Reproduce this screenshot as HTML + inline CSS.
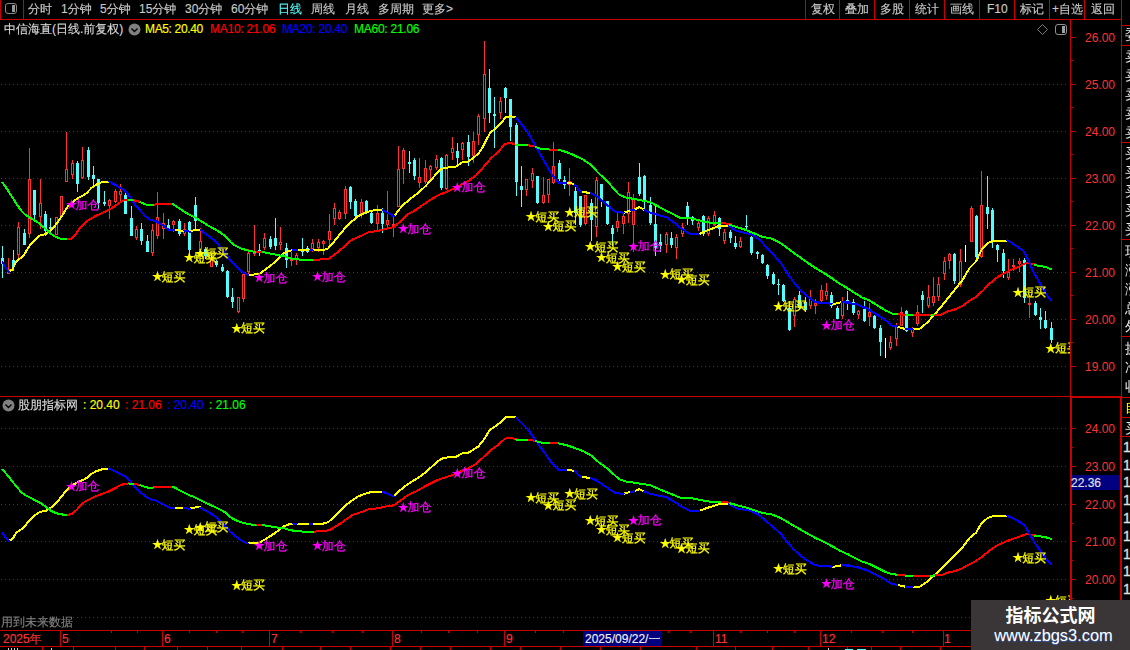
<!DOCTYPE html><html><head><meta charset="utf-8"><title>chart</title><style>
html,body{margin:0;padding:0;background:#000;}
body{width:1130px;height:650px;overflow:hidden;position:relative;font-family:"Liberation Sans","WenQuanYi Zen Hei",sans-serif;font-size:12px;color:#c8c8c8;}
.t{position:absolute;white-space:nowrap;line-height:14px;height:14px;-webkit-text-stroke:0.15px;}
.ax{position:absolute;left:1085px;color:#ff3232;line-height:14px;}
.s{position:absolute;left:1125px;font-size:14px;line-height:16px;color:#e8e8e8;white-space:nowrap;}
.one{position:absolute;left:1123px;font-size:14px;color:#e0e0e0;line-height:16px;-webkit-text-stroke:0.3px;}
#wm{position:absolute;left:971px;top:600px;width:159px;height:50px;background:#3a3536;text-align:center;color:#fff;}

</style></head><body>
<svg width="1130" height="650" viewBox="0 0 1130 650" style="position:absolute;left:0;top:0" shape-rendering="crispEdges">
<line x1="1" y1="84.5" x2="1066" y2="84.5" stroke="#c80000" stroke-width="1" stroke-dasharray="1 3"/>
<line x1="1" y1="131.5" x2="1066" y2="131.5" stroke="#c80000" stroke-width="1" stroke-dasharray="1 3"/>
<line x1="1" y1="178.5" x2="1066" y2="178.5" stroke="#c80000" stroke-width="1" stroke-dasharray="1 3"/>
<line x1="1" y1="225.5" x2="1066" y2="225.5" stroke="#c80000" stroke-width="1" stroke-dasharray="1 3"/>
<line x1="1" y1="272.5" x2="1066" y2="272.5" stroke="#c80000" stroke-width="1" stroke-dasharray="1 3"/>
<line x1="1" y1="319.5" x2="1066" y2="319.5" stroke="#c80000" stroke-width="1" stroke-dasharray="1 3"/>
<line x1="1" y1="366.5" x2="1066" y2="366.5" stroke="#c80000" stroke-width="1" stroke-dasharray="1 3"/>
<line x1="1" y1="428.5" x2="1066" y2="428.5" stroke="#c80000" stroke-width="1" stroke-dasharray="1 3"/>
<line x1="1" y1="466.5" x2="1066" y2="466.5" stroke="#c80000" stroke-width="1" stroke-dasharray="1 3"/>
<line x1="1" y1="504.5" x2="1066" y2="504.5" stroke="#c80000" stroke-width="1" stroke-dasharray="1 3"/>
<line x1="1" y1="541.5" x2="1066" y2="541.5" stroke="#c80000" stroke-width="1" stroke-dasharray="1 3"/>
<line x1="1" y1="579.5" x2="1066" y2="579.5" stroke="#c80000" stroke-width="1" stroke-dasharray="1 3"/>
<line x1="73" y1="617.5" x2="1066" y2="617.5" stroke="#c80000" stroke-width="1" stroke-dasharray="1 3"/>
<rect x="2" y="246" width="1" height="32" fill="#54fcfc"/>
<rect x="1" y="258" width="3" height="6" fill="#54fcfc"/>
<rect x="8" y="258" width="1" height="16" fill="#ff3232"/>
<rect x="7" y="269" width="3" height="5" fill="#ff3232"/>
<rect x="8" y="270" width="1" height="3" fill="#000"/>
<rect x="13" y="250" width="1" height="21" fill="#54fcfc"/>
<rect x="12" y="260" width="3" height="7" fill="#54fcfc"/>
<rect x="18" y="222" width="1" height="36" fill="#ff3232"/>
<rect x="17" y="227" width="3" height="28" fill="#ff3232"/>
<rect x="18" y="228" width="1" height="26" fill="#000"/>
<rect x="24" y="229" width="1" height="16" fill="#54fcfc"/>
<rect x="23" y="233" width="3" height="12" fill="#54fcfc"/>
<rect x="29" y="148" width="1" height="90" fill="#ff3232"/>
<rect x="28" y="179" width="3" height="55" fill="#ff3232"/>
<rect x="29" y="180" width="1" height="53" fill="#000"/>
<rect x="34" y="190" width="1" height="30" fill="#54fcfc"/>
<rect x="33" y="190" width="3" height="25" fill="#54fcfc"/>
<rect x="40" y="179" width="1" height="50" fill="#ff3232"/>
<rect x="39" y="203" width="3" height="14" fill="#ff3232"/>
<rect x="40" y="204" width="1" height="12" fill="#000"/>
<rect x="45" y="211" width="1" height="25" fill="#54fcfc"/>
<rect x="44" y="214" width="3" height="17" fill="#54fcfc"/>
<rect x="50" y="218" width="1" height="17" fill="#54fcfc"/>
<rect x="49" y="227" width="3" height="2" fill="#54fcfc"/>
<rect x="56" y="217" width="1" height="18" fill="#ff3232"/>
<rect x="55" y="217" width="3" height="18" fill="#ff3232"/>
<rect x="56" y="218" width="1" height="16" fill="#000"/>
<rect x="61" y="196" width="1" height="21" fill="#ff3232"/>
<rect x="60" y="196" width="3" height="21" fill="#ff3232"/>
<rect x="61" y="197" width="1" height="19" fill="#000"/>
<rect x="66" y="132" width="1" height="50" fill="#ff3232"/>
<rect x="65" y="169" width="3" height="13" fill="#ff3232"/>
<rect x="66" y="170" width="1" height="11" fill="#000"/>
<rect x="72" y="160" width="1" height="19" fill="#ff3232"/>
<rect x="71" y="163" width="3" height="12" fill="#ff3232"/>
<rect x="72" y="164" width="1" height="10" fill="#000"/>
<rect x="77" y="161" width="1" height="31" fill="#54fcfc"/>
<rect x="76" y="163" width="3" height="21" fill="#54fcfc"/>
<rect x="82" y="147" width="1" height="32" fill="#ff3232"/>
<rect x="81" y="160" width="3" height="18" fill="#ff3232"/>
<rect x="82" y="161" width="1" height="16" fill="#000"/>
<rect x="88" y="147" width="1" height="33" fill="#54fcfc"/>
<rect x="87" y="150" width="3" height="27" fill="#54fcfc"/>
<rect x="93" y="166" width="1" height="20" fill="#54fcfc"/>
<rect x="92" y="175" width="3" height="4" fill="#54fcfc"/>
<rect x="98" y="179" width="1" height="30" fill="#54fcfc"/>
<rect x="97" y="179" width="3" height="24" fill="#54fcfc"/>
<rect x="104" y="191" width="1" height="15" fill="#54fcfc"/>
<rect x="103" y="202" width="3" height="2" fill="#54fcfc"/>
<rect x="109" y="199" width="1" height="20" fill="#ff3232"/>
<rect x="108" y="200" width="3" height="6" fill="#ff3232"/>
<rect x="109" y="201" width="1" height="4" fill="#000"/>
<rect x="115" y="189" width="1" height="14" fill="#ff3232"/>
<rect x="114" y="191" width="3" height="11" fill="#ff3232"/>
<rect x="115" y="192" width="1" height="9" fill="#000"/>
<rect x="120" y="184" width="1" height="19" fill="#ff3232"/>
<rect x="119" y="191" width="3" height="4" fill="#ff3232"/>
<rect x="120" y="192" width="1" height="2" fill="#000"/>
<rect x="125" y="192" width="1" height="22" fill="#54fcfc"/>
<rect x="124" y="195" width="3" height="19" fill="#54fcfc"/>
<rect x="131" y="206" width="1" height="30" fill="#54fcfc"/>
<rect x="130" y="218" width="3" height="18" fill="#54fcfc"/>
<rect x="136" y="226" width="1" height="14" fill="#ff3232"/>
<rect x="135" y="229" width="3" height="9" fill="#ff3232"/>
<rect x="136" y="230" width="1" height="7" fill="#000"/>
<rect x="141" y="223" width="1" height="22" fill="#54fcfc"/>
<rect x="140" y="229" width="3" height="12" fill="#54fcfc"/>
<rect x="147" y="235" width="1" height="17" fill="#54fcfc"/>
<rect x="146" y="241" width="3" height="11" fill="#54fcfc"/>
<rect x="152" y="224" width="1" height="32" fill="#ff3232"/>
<rect x="151" y="230" width="3" height="23" fill="#ff3232"/>
<rect x="152" y="231" width="1" height="21" fill="#000"/>
<rect x="157" y="192" width="1" height="47" fill="#ff3232"/>
<rect x="156" y="217" width="3" height="19" fill="#ff3232"/>
<rect x="157" y="218" width="1" height="17" fill="#000"/>
<rect x="163" y="213" width="1" height="26" fill="#ff3232"/>
<rect x="162" y="223" width="3" height="6" fill="#ff3232"/>
<rect x="163" y="224" width="1" height="4" fill="#000"/>
<rect x="168" y="219" width="1" height="10" fill="#54fcfc"/>
<rect x="167" y="225" width="3" height="4" fill="#54fcfc"/>
<rect x="173" y="220" width="1" height="12" fill="#ff3232"/>
<rect x="172" y="221" width="3" height="4" fill="#ff3232"/>
<rect x="173" y="222" width="1" height="2" fill="#000"/>
<rect x="179" y="219" width="1" height="17" fill="#54fcfc"/>
<rect x="178" y="221" width="3" height="13" fill="#54fcfc"/>
<rect x="184" y="223" width="1" height="13" fill="#ff3232"/>
<rect x="183" y="229" width="3" height="5" fill="#ff3232"/>
<rect x="184" y="230" width="1" height="3" fill="#000"/>
<rect x="189" y="221" width="1" height="38" fill="#54fcfc"/>
<rect x="188" y="222" width="3" height="28" fill="#54fcfc"/>
<rect x="195" y="197" width="1" height="32" fill="#54fcfc"/>
<rect x="194" y="205" width="3" height="16" fill="#54fcfc"/>
<rect x="200" y="228" width="1" height="22" fill="#ff3232"/>
<rect x="199" y="241" width="3" height="9" fill="#ff3232"/>
<rect x="200" y="242" width="1" height="7" fill="#000"/>
<rect x="205" y="247" width="1" height="12" fill="#54fcfc"/>
<rect x="204" y="249" width="3" height="7" fill="#54fcfc"/>
<rect x="211" y="254" width="1" height="13" fill="#ff3232"/>
<rect x="210" y="259" width="3" height="8" fill="#ff3232"/>
<rect x="211" y="260" width="1" height="6" fill="#000"/>
<rect x="216" y="260" width="1" height="7" fill="#54fcfc"/>
<rect x="215" y="261" width="3" height="4" fill="#54fcfc"/>
<rect x="222" y="264" width="1" height="8" fill="#54fcfc"/>
<rect x="221" y="267" width="3" height="4" fill="#54fcfc"/>
<rect x="227" y="270" width="1" height="28" fill="#54fcfc"/>
<rect x="226" y="271" width="3" height="26" fill="#54fcfc"/>
<rect x="232" y="288" width="1" height="20" fill="#54fcfc"/>
<rect x="231" y="297" width="3" height="5" fill="#54fcfc"/>
<rect x="238" y="297" width="1" height="16" fill="#ff3232"/>
<rect x="237" y="297" width="3" height="15" fill="#ff3232"/>
<rect x="238" y="298" width="1" height="13" fill="#000"/>
<rect x="243" y="272" width="1" height="30" fill="#ff3232"/>
<rect x="242" y="274" width="3" height="25" fill="#ff3232"/>
<rect x="243" y="275" width="1" height="23" fill="#000"/>
<rect x="248" y="249" width="1" height="25" fill="#ff3232"/>
<rect x="247" y="253" width="3" height="19" fill="#ff3232"/>
<rect x="248" y="254" width="1" height="17" fill="#000"/>
<rect x="254" y="225" width="1" height="31" fill="#ff3232"/>
<rect x="253" y="252" width="3" height="2" fill="#ff3232"/>
<rect x="259" y="244" width="1" height="12" fill="#54fcfc"/>
<rect x="258" y="250" width="3" height="2" fill="#54fcfc"/>
<rect x="264" y="233" width="1" height="17" fill="#ff3232"/>
<rect x="263" y="238" width="3" height="10" fill="#ff3232"/>
<rect x="264" y="239" width="1" height="8" fill="#000"/>
<rect x="270" y="236" width="1" height="13" fill="#54fcfc"/>
<rect x="269" y="239" width="3" height="8" fill="#54fcfc"/>
<rect x="275" y="218" width="1" height="32" fill="#54fcfc"/>
<rect x="274" y="238" width="3" height="8" fill="#54fcfc"/>
<rect x="280" y="227" width="1" height="23" fill="#ff3232"/>
<rect x="279" y="242" width="3" height="3" fill="#ff3232"/>
<rect x="280" y="243" width="1" height="1" fill="#000"/>
<rect x="286" y="243" width="1" height="25" fill="#54fcfc"/>
<rect x="285" y="248" width="3" height="12" fill="#54fcfc"/>
<rect x="291" y="252" width="1" height="14" fill="#ff3232"/>
<rect x="290" y="259" width="3" height="2" fill="#ff3232"/>
<rect x="296" y="253" width="1" height="12" fill="#ff3232"/>
<rect x="295" y="255" width="3" height="5" fill="#ff3232"/>
<rect x="296" y="256" width="1" height="3" fill="#000"/>
<rect x="302" y="238" width="1" height="18" fill="#54fcfc"/>
<rect x="301" y="249" width="3" height="3" fill="#54fcfc"/>
<rect x="307" y="246" width="1" height="7" fill="#54fcfc"/>
<rect x="306" y="248" width="3" height="4" fill="#54fcfc"/>
<rect x="312" y="239" width="1" height="13" fill="#ff3232"/>
<rect x="311" y="243" width="3" height="6" fill="#ff3232"/>
<rect x="312" y="244" width="1" height="4" fill="#000"/>
<rect x="318" y="239" width="1" height="13" fill="#ff3232"/>
<rect x="317" y="242" width="3" height="6" fill="#ff3232"/>
<rect x="318" y="243" width="1" height="4" fill="#000"/>
<rect x="323" y="240" width="1" height="15" fill="#ff3232"/>
<rect x="322" y="241" width="3" height="3" fill="#ff3232"/>
<rect x="323" y="242" width="1" height="1" fill="#000"/>
<rect x="329" y="214" width="1" height="31" fill="#ff3232"/>
<rect x="328" y="231" width="3" height="9" fill="#ff3232"/>
<rect x="329" y="232" width="1" height="7" fill="#000"/>
<rect x="334" y="203" width="1" height="22" fill="#ff3232"/>
<rect x="333" y="208" width="3" height="11" fill="#ff3232"/>
<rect x="334" y="209" width="1" height="9" fill="#000"/>
<rect x="339" y="210" width="1" height="10" fill="#ff3232"/>
<rect x="338" y="212" width="3" height="7" fill="#ff3232"/>
<rect x="339" y="213" width="1" height="5" fill="#000"/>
<rect x="345" y="186" width="1" height="33" fill="#ff3232"/>
<rect x="344" y="189" width="3" height="25" fill="#ff3232"/>
<rect x="345" y="190" width="1" height="23" fill="#000"/>
<rect x="350" y="186" width="1" height="23" fill="#54fcfc"/>
<rect x="349" y="187" width="3" height="15" fill="#54fcfc"/>
<rect x="355" y="199" width="1" height="19" fill="#54fcfc"/>
<rect x="354" y="201" width="3" height="15" fill="#54fcfc"/>
<rect x="361" y="199" width="1" height="19" fill="#ff3232"/>
<rect x="360" y="202" width="3" height="12" fill="#ff3232"/>
<rect x="361" y="203" width="1" height="10" fill="#000"/>
<rect x="366" y="200" width="1" height="14" fill="#54fcfc"/>
<rect x="365" y="201" width="3" height="12" fill="#54fcfc"/>
<rect x="371" y="212" width="1" height="12" fill="#54fcfc"/>
<rect x="370" y="213" width="3" height="10" fill="#54fcfc"/>
<rect x="377" y="205" width="1" height="25" fill="#ff3232"/>
<rect x="376" y="213" width="3" height="11" fill="#ff3232"/>
<rect x="377" y="214" width="1" height="9" fill="#000"/>
<rect x="382" y="208" width="1" height="25" fill="#54fcfc"/>
<rect x="381" y="213" width="3" height="11" fill="#54fcfc"/>
<rect x="387" y="191" width="1" height="36" fill="#ff3232"/>
<rect x="386" y="220" width="3" height="5" fill="#ff3232"/>
<rect x="387" y="221" width="1" height="3" fill="#000"/>
<rect x="393" y="216" width="1" height="21" fill="#ff3232"/>
<rect x="392" y="224" width="3" height="2" fill="#ff3232"/>
<rect x="398" y="146" width="1" height="61" fill="#ff3232"/>
<rect x="397" y="169" width="3" height="38" fill="#ff3232"/>
<rect x="398" y="170" width="1" height="36" fill="#000"/>
<rect x="403" y="148" width="1" height="36" fill="#ff3232"/>
<rect x="402" y="150" width="3" height="19" fill="#ff3232"/>
<rect x="403" y="151" width="1" height="17" fill="#000"/>
<rect x="409" y="151" width="1" height="22" fill="#54fcfc"/>
<rect x="408" y="162" width="3" height="2" fill="#54fcfc"/>
<rect x="414" y="158" width="1" height="22" fill="#54fcfc"/>
<rect x="413" y="160" width="3" height="16" fill="#54fcfc"/>
<rect x="419" y="158" width="1" height="30" fill="#ff3232"/>
<rect x="418" y="177" width="3" height="6" fill="#ff3232"/>
<rect x="419" y="178" width="1" height="4" fill="#000"/>
<rect x="425" y="160" width="1" height="24" fill="#ff3232"/>
<rect x="424" y="168" width="3" height="14" fill="#ff3232"/>
<rect x="425" y="169" width="1" height="12" fill="#000"/>
<rect x="430" y="165" width="1" height="14" fill="#ff3232"/>
<rect x="429" y="166" width="3" height="4" fill="#ff3232"/>
<rect x="430" y="167" width="1" height="2" fill="#000"/>
<rect x="436" y="155" width="1" height="15" fill="#ff3232"/>
<rect x="435" y="159" width="3" height="9" fill="#ff3232"/>
<rect x="436" y="160" width="1" height="7" fill="#000"/>
<rect x="441" y="157" width="1" height="33" fill="#54fcfc"/>
<rect x="440" y="158" width="3" height="30" fill="#54fcfc"/>
<rect x="446" y="154" width="1" height="36" fill="#ff3232"/>
<rect x="445" y="155" width="3" height="34" fill="#ff3232"/>
<rect x="446" y="156" width="1" height="32" fill="#000"/>
<rect x="452" y="137" width="1" height="23" fill="#ff3232"/>
<rect x="451" y="148" width="3" height="5" fill="#ff3232"/>
<rect x="452" y="149" width="1" height="3" fill="#000"/>
<rect x="457" y="143" width="1" height="23" fill="#54fcfc"/>
<rect x="456" y="151" width="3" height="7" fill="#54fcfc"/>
<rect x="462" y="142" width="1" height="18" fill="#ff3232"/>
<rect x="461" y="143" width="3" height="7" fill="#ff3232"/>
<rect x="462" y="144" width="1" height="5" fill="#000"/>
<rect x="468" y="135" width="1" height="31" fill="#54fcfc"/>
<rect x="467" y="142" width="3" height="15" fill="#54fcfc"/>
<rect x="473" y="132" width="1" height="31" fill="#ff3232"/>
<rect x="472" y="141" width="3" height="15" fill="#ff3232"/>
<rect x="473" y="142" width="1" height="13" fill="#000"/>
<rect x="478" y="114" width="1" height="31" fill="#ff3232"/>
<rect x="477" y="116" width="3" height="19" fill="#ff3232"/>
<rect x="478" y="117" width="1" height="17" fill="#000"/>
<rect x="484" y="41" width="1" height="91" fill="#ff3232"/>
<rect x="483" y="74" width="3" height="45" fill="#ff3232"/>
<rect x="484" y="75" width="1" height="43" fill="#000"/>
<rect x="489" y="69" width="1" height="54" fill="#54fcfc"/>
<rect x="488" y="88" width="3" height="25" fill="#54fcfc"/>
<rect x="494" y="97" width="1" height="51" fill="#54fcfc"/>
<rect x="493" y="114" width="3" height="2" fill="#54fcfc"/>
<rect x="500" y="97" width="1" height="22" fill="#ff3232"/>
<rect x="499" y="101" width="3" height="12" fill="#ff3232"/>
<rect x="500" y="102" width="1" height="10" fill="#000"/>
<rect x="505" y="87" width="1" height="26" fill="#54fcfc"/>
<rect x="504" y="88" width="3" height="10" fill="#54fcfc"/>
<rect x="510" y="99" width="1" height="42" fill="#54fcfc"/>
<rect x="509" y="99" width="3" height="28" fill="#54fcfc"/>
<rect x="516" y="123" width="1" height="73" fill="#54fcfc"/>
<rect x="515" y="125" width="3" height="57" fill="#54fcfc"/>
<rect x="521" y="166" width="1" height="41" fill="#54fcfc"/>
<rect x="520" y="186" width="3" height="4" fill="#54fcfc"/>
<rect x="526" y="179" width="1" height="17" fill="#ff3232"/>
<rect x="525" y="179" width="3" height="11" fill="#ff3232"/>
<rect x="526" y="180" width="1" height="9" fill="#000"/>
<rect x="532" y="168" width="1" height="20" fill="#ff3232"/>
<rect x="531" y="173" width="3" height="8" fill="#ff3232"/>
<rect x="532" y="174" width="1" height="6" fill="#000"/>
<rect x="537" y="176" width="1" height="28" fill="#54fcfc"/>
<rect x="536" y="176" width="3" height="27" fill="#54fcfc"/>
<rect x="543" y="177" width="1" height="27" fill="#ff3232"/>
<rect x="542" y="195" width="3" height="8" fill="#ff3232"/>
<rect x="543" y="196" width="1" height="6" fill="#000"/>
<rect x="548" y="179" width="1" height="24" fill="#ff3232"/>
<rect x="547" y="179" width="3" height="16" fill="#ff3232"/>
<rect x="548" y="180" width="1" height="14" fill="#000"/>
<rect x="553" y="142" width="1" height="42" fill="#ff3232"/>
<rect x="552" y="166" width="3" height="17" fill="#ff3232"/>
<rect x="553" y="167" width="1" height="15" fill="#000"/>
<rect x="559" y="160" width="1" height="21" fill="#54fcfc"/>
<rect x="558" y="163" width="3" height="16" fill="#54fcfc"/>
<rect x="564" y="176" width="1" height="13" fill="#54fcfc"/>
<rect x="563" y="180" width="3" height="5" fill="#54fcfc"/>
<rect x="569" y="168" width="1" height="28" fill="#ff3232"/>
<rect x="568" y="181" width="3" height="4" fill="#ff3232"/>
<rect x="569" y="182" width="1" height="2" fill="#000"/>
<rect x="575" y="187" width="1" height="38" fill="#54fcfc"/>
<rect x="574" y="191" width="3" height="22" fill="#54fcfc"/>
<rect x="580" y="196" width="1" height="31" fill="#54fcfc"/>
<rect x="579" y="196" width="3" height="29" fill="#54fcfc"/>
<rect x="585" y="195" width="1" height="30" fill="#ff3232"/>
<rect x="584" y="195" width="3" height="29" fill="#ff3232"/>
<rect x="585" y="196" width="1" height="27" fill="#000"/>
<rect x="591" y="199" width="1" height="42" fill="#54fcfc"/>
<rect x="590" y="203" width="3" height="17" fill="#54fcfc"/>
<rect x="596" y="177" width="1" height="60" fill="#ff3232"/>
<rect x="595" y="180" width="3" height="47" fill="#ff3232"/>
<rect x="596" y="181" width="1" height="45" fill="#000"/>
<rect x="601" y="184" width="1" height="23" fill="#54fcfc"/>
<rect x="600" y="184" width="3" height="17" fill="#54fcfc"/>
<rect x="607" y="201" width="1" height="24" fill="#54fcfc"/>
<rect x="606" y="201" width="3" height="23" fill="#54fcfc"/>
<rect x="612" y="225" width="1" height="21" fill="#54fcfc"/>
<rect x="611" y="228" width="3" height="6" fill="#54fcfc"/>
<rect x="617" y="213" width="1" height="19" fill="#ff3232"/>
<rect x="616" y="221" width="3" height="7" fill="#ff3232"/>
<rect x="617" y="222" width="1" height="5" fill="#000"/>
<rect x="623" y="214" width="1" height="20" fill="#ff3232"/>
<rect x="622" y="216" width="3" height="8" fill="#ff3232"/>
<rect x="623" y="217" width="1" height="6" fill="#000"/>
<rect x="628" y="182" width="1" height="41" fill="#ff3232"/>
<rect x="627" y="192" width="3" height="22" fill="#ff3232"/>
<rect x="628" y="193" width="1" height="20" fill="#000"/>
<rect x="633" y="194" width="1" height="58" fill="#ff3232"/>
<rect x="632" y="199" width="3" height="26" fill="#ff3232"/>
<rect x="633" y="200" width="1" height="24" fill="#000"/>
<rect x="639" y="163" width="1" height="33" fill="#54fcfc"/>
<rect x="638" y="177" width="3" height="17" fill="#54fcfc"/>
<rect x="644" y="175" width="1" height="35" fill="#54fcfc"/>
<rect x="643" y="176" width="3" height="25" fill="#54fcfc"/>
<rect x="650" y="197" width="1" height="28" fill="#54fcfc"/>
<rect x="649" y="205" width="3" height="18" fill="#54fcfc"/>
<rect x="655" y="205" width="1" height="51" fill="#54fcfc"/>
<rect x="654" y="224" width="3" height="24" fill="#54fcfc"/>
<rect x="660" y="234" width="1" height="18" fill="#54fcfc"/>
<rect x="659" y="242" width="3" height="4" fill="#54fcfc"/>
<rect x="666" y="232" width="1" height="21" fill="#ff3232"/>
<rect x="665" y="234" width="3" height="11" fill="#ff3232"/>
<rect x="666" y="235" width="1" height="9" fill="#000"/>
<rect x="671" y="232" width="1" height="16" fill="#54fcfc"/>
<rect x="670" y="238" width="3" height="7" fill="#54fcfc"/>
<rect x="676" y="234" width="1" height="25" fill="#ff3232"/>
<rect x="675" y="237" width="3" height="11" fill="#ff3232"/>
<rect x="676" y="238" width="1" height="9" fill="#000"/>
<rect x="682" y="223" width="1" height="14" fill="#ff3232"/>
<rect x="681" y="227" width="3" height="7" fill="#ff3232"/>
<rect x="682" y="228" width="1" height="5" fill="#000"/>
<rect x="687" y="202" width="1" height="23" fill="#54fcfc"/>
<rect x="686" y="206" width="3" height="13" fill="#54fcfc"/>
<rect x="692" y="216" width="1" height="9" fill="#54fcfc"/>
<rect x="691" y="217" width="3" height="4" fill="#54fcfc"/>
<rect x="698" y="221" width="1" height="10" fill="#ff3232"/>
<rect x="697" y="223" width="3" height="5" fill="#ff3232"/>
<rect x="698" y="224" width="1" height="3" fill="#000"/>
<rect x="703" y="215" width="1" height="21" fill="#54fcfc"/>
<rect x="702" y="216" width="3" height="18" fill="#54fcfc"/>
<rect x="708" y="216" width="1" height="20" fill="#ff3232"/>
<rect x="707" y="218" width="3" height="16" fill="#ff3232"/>
<rect x="708" y="219" width="1" height="14" fill="#000"/>
<rect x="714" y="211" width="1" height="15" fill="#ff3232"/>
<rect x="713" y="215" width="3" height="10" fill="#ff3232"/>
<rect x="714" y="216" width="1" height="8" fill="#000"/>
<rect x="719" y="217" width="1" height="19" fill="#54fcfc"/>
<rect x="718" y="218" width="3" height="11" fill="#54fcfc"/>
<rect x="724" y="229" width="1" height="15" fill="#ff3232"/>
<rect x="723" y="232" width="3" height="9" fill="#ff3232"/>
<rect x="724" y="233" width="1" height="7" fill="#000"/>
<rect x="730" y="230" width="1" height="13" fill="#54fcfc"/>
<rect x="729" y="232" width="3" height="6" fill="#54fcfc"/>
<rect x="735" y="236" width="1" height="13" fill="#54fcfc"/>
<rect x="734" y="243" width="3" height="4" fill="#54fcfc"/>
<rect x="740" y="237" width="1" height="11" fill="#ff3232"/>
<rect x="739" y="241" width="3" height="6" fill="#ff3232"/>
<rect x="740" y="242" width="1" height="4" fill="#000"/>
<rect x="746" y="215" width="1" height="14" fill="#54fcfc"/>
<rect x="745" y="226" width="3" height="1" fill="#54fcfc"/>
<rect x="751" y="236" width="1" height="19" fill="#54fcfc"/>
<rect x="750" y="237" width="3" height="16" fill="#54fcfc"/>
<rect x="757" y="251" width="1" height="8" fill="#54fcfc"/>
<rect x="756" y="252" width="3" height="2" fill="#54fcfc"/>
<rect x="762" y="254" width="1" height="10" fill="#54fcfc"/>
<rect x="761" y="255" width="3" height="8" fill="#54fcfc"/>
<rect x="767" y="264" width="1" height="15" fill="#54fcfc"/>
<rect x="766" y="265" width="3" height="11" fill="#54fcfc"/>
<rect x="773" y="272" width="1" height="13" fill="#54fcfc"/>
<rect x="772" y="274" width="3" height="10" fill="#54fcfc"/>
<rect x="778" y="279" width="1" height="16" fill="#54fcfc"/>
<rect x="777" y="284" width="3" height="1" fill="#54fcfc"/>
<rect x="783" y="284" width="1" height="18" fill="#54fcfc"/>
<rect x="782" y="285" width="3" height="16" fill="#54fcfc"/>
<rect x="789" y="301" width="1" height="30" fill="#54fcfc"/>
<rect x="788" y="308" width="3" height="22" fill="#54fcfc"/>
<rect x="794" y="297" width="1" height="30" fill="#ff3232"/>
<rect x="793" y="299" width="3" height="17" fill="#ff3232"/>
<rect x="794" y="300" width="1" height="15" fill="#000"/>
<rect x="799" y="291" width="1" height="18" fill="#54fcfc"/>
<rect x="798" y="295" width="3" height="13" fill="#54fcfc"/>
<rect x="805" y="297" width="1" height="15" fill="#54fcfc"/>
<rect x="804" y="302" width="3" height="8" fill="#54fcfc"/>
<rect x="810" y="290" width="1" height="19" fill="#ff3232"/>
<rect x="809" y="299" width="3" height="7" fill="#ff3232"/>
<rect x="810" y="300" width="1" height="5" fill="#000"/>
<rect x="815" y="299" width="1" height="15" fill="#ff3232"/>
<rect x="814" y="303" width="3" height="3" fill="#ff3232"/>
<rect x="815" y="304" width="1" height="1" fill="#000"/>
<rect x="821" y="285" width="1" height="17" fill="#ff3232"/>
<rect x="820" y="290" width="3" height="11" fill="#ff3232"/>
<rect x="821" y="291" width="1" height="9" fill="#000"/>
<rect x="826" y="283" width="1" height="17" fill="#ff3232"/>
<rect x="825" y="291" width="3" height="5" fill="#ff3232"/>
<rect x="826" y="292" width="1" height="3" fill="#000"/>
<rect x="831" y="292" width="1" height="16" fill="#54fcfc"/>
<rect x="830" y="295" width="3" height="11" fill="#54fcfc"/>
<rect x="837" y="306" width="1" height="13" fill="#54fcfc"/>
<rect x="836" y="308" width="3" height="11" fill="#54fcfc"/>
<rect x="842" y="297" width="1" height="22" fill="#ff3232"/>
<rect x="841" y="301" width="3" height="15" fill="#ff3232"/>
<rect x="842" y="302" width="1" height="13" fill="#000"/>
<rect x="847" y="291" width="1" height="19" fill="#54fcfc"/>
<rect x="846" y="300" width="3" height="3" fill="#54fcfc"/>
<rect x="853" y="299" width="1" height="16" fill="#54fcfc"/>
<rect x="852" y="302" width="3" height="11" fill="#54fcfc"/>
<rect x="858" y="310" width="1" height="9" fill="#ff3232"/>
<rect x="857" y="311" width="3" height="4" fill="#ff3232"/>
<rect x="858" y="312" width="1" height="2" fill="#000"/>
<rect x="864" y="301" width="1" height="21" fill="#54fcfc"/>
<rect x="863" y="309" width="3" height="12" fill="#54fcfc"/>
<rect x="869" y="303" width="1" height="23" fill="#ff3232"/>
<rect x="868" y="312" width="3" height="5" fill="#ff3232"/>
<rect x="869" y="313" width="1" height="3" fill="#000"/>
<rect x="874" y="315" width="1" height="14" fill="#54fcfc"/>
<rect x="873" y="316" width="3" height="12" fill="#54fcfc"/>
<rect x="880" y="325" width="1" height="31" fill="#54fcfc"/>
<rect x="879" y="328" width="3" height="14" fill="#54fcfc"/>
<rect x="885" y="338" width="1" height="20" fill="#ffffff"/>
<rect x="890" y="336" width="1" height="14" fill="#ff3232"/>
<rect x="889" y="342" width="3" height="6" fill="#ff3232"/>
<rect x="890" y="343" width="1" height="4" fill="#000"/>
<rect x="896" y="323" width="1" height="23" fill="#ff3232"/>
<rect x="895" y="327" width="3" height="12" fill="#ff3232"/>
<rect x="896" y="328" width="1" height="10" fill="#000"/>
<rect x="901" y="307" width="1" height="19" fill="#ff3232"/>
<rect x="900" y="312" width="3" height="14" fill="#ff3232"/>
<rect x="901" y="313" width="1" height="12" fill="#000"/>
<rect x="906" y="310" width="1" height="22" fill="#54fcfc"/>
<rect x="905" y="311" width="3" height="20" fill="#54fcfc"/>
<rect x="912" y="327" width="1" height="10" fill="#ff3232"/>
<rect x="911" y="328" width="3" height="5" fill="#ff3232"/>
<rect x="912" y="329" width="1" height="3" fill="#000"/>
<rect x="917" y="305" width="1" height="21" fill="#ff3232"/>
<rect x="916" y="312" width="3" height="12" fill="#ff3232"/>
<rect x="917" y="313" width="1" height="10" fill="#000"/>
<rect x="922" y="291" width="1" height="22" fill="#54fcfc"/>
<rect x="921" y="295" width="3" height="5" fill="#54fcfc"/>
<rect x="928" y="285" width="1" height="23" fill="#ff3232"/>
<rect x="927" y="297" width="3" height="9" fill="#ff3232"/>
<rect x="928" y="298" width="1" height="7" fill="#000"/>
<rect x="933" y="277" width="1" height="29" fill="#ff3232"/>
<rect x="932" y="296" width="3" height="7" fill="#ff3232"/>
<rect x="933" y="297" width="1" height="5" fill="#000"/>
<rect x="938" y="277" width="1" height="24" fill="#ff3232"/>
<rect x="937" y="284" width="3" height="13" fill="#ff3232"/>
<rect x="938" y="285" width="1" height="11" fill="#000"/>
<rect x="944" y="257" width="1" height="23" fill="#ff3232"/>
<rect x="943" y="261" width="3" height="13" fill="#ff3232"/>
<rect x="944" y="262" width="1" height="11" fill="#000"/>
<rect x="949" y="253" width="1" height="16" fill="#ff3232"/>
<rect x="948" y="254" width="3" height="7" fill="#ff3232"/>
<rect x="949" y="255" width="1" height="5" fill="#000"/>
<rect x="954" y="253" width="1" height="31" fill="#54fcfc"/>
<rect x="953" y="254" width="3" height="27" fill="#54fcfc"/>
<rect x="960" y="249" width="1" height="38" fill="#ff3232"/>
<rect x="959" y="261" width="3" height="24" fill="#ff3232"/>
<rect x="960" y="262" width="1" height="22" fill="#000"/>
<rect x="965" y="245" width="1" height="17" fill="#ffffff"/>
<rect x="971" y="206" width="1" height="36" fill="#ff3232"/>
<rect x="970" y="208" width="3" height="34" fill="#ff3232"/>
<rect x="971" y="209" width="1" height="32" fill="#000"/>
<rect x="976" y="215" width="1" height="43" fill="#54fcfc"/>
<rect x="975" y="216" width="3" height="41" fill="#54fcfc"/>
<rect x="981" y="171" width="1" height="87" fill="#ff3232"/>
<rect x="980" y="205" width="3" height="52" fill="#ff3232"/>
<rect x="981" y="206" width="1" height="50" fill="#000"/>
<rect x="987" y="176" width="1" height="53" fill="#54fcfc"/>
<rect x="986" y="207" width="3" height="7" fill="#54fcfc"/>
<rect x="992" y="208" width="1" height="40" fill="#54fcfc"/>
<rect x="991" y="210" width="3" height="30" fill="#54fcfc"/>
<rect x="997" y="244" width="1" height="18" fill="#54fcfc"/>
<rect x="996" y="245" width="3" height="5" fill="#54fcfc"/>
<rect x="1003" y="249" width="1" height="29" fill="#54fcfc"/>
<rect x="1002" y="253" width="3" height="18" fill="#54fcfc"/>
<rect x="1008" y="259" width="1" height="21" fill="#ff3232"/>
<rect x="1007" y="272" width="3" height="6" fill="#ff3232"/>
<rect x="1008" y="273" width="1" height="4" fill="#000"/>
<rect x="1013" y="259" width="1" height="12" fill="#ff3232"/>
<rect x="1012" y="265" width="3" height="2" fill="#ff3232"/>
<rect x="1019" y="258" width="1" height="14" fill="#ff3232"/>
<rect x="1018" y="261" width="3" height="3" fill="#ff3232"/>
<rect x="1019" y="262" width="1" height="1" fill="#000"/>
<rect x="1024" y="258" width="1" height="45" fill="#54fcfc"/>
<rect x="1023" y="260" width="3" height="38" fill="#54fcfc"/>
<rect x="1029" y="298" width="1" height="20" fill="#ff3232"/>
<rect x="1028" y="303" width="3" height="2" fill="#ff3232"/>
<rect x="1035" y="301" width="1" height="15" fill="#54fcfc"/>
<rect x="1034" y="303" width="3" height="12" fill="#54fcfc"/>
<rect x="1040" y="308" width="1" height="21" fill="#54fcfc"/>
<rect x="1039" y="317" width="3" height="3" fill="#54fcfc"/>
<rect x="1045" y="311" width="1" height="18" fill="#54fcfc"/>
<rect x="1044" y="320" width="3" height="8" fill="#54fcfc"/>
<rect x="1051" y="322" width="1" height="21" fill="#54fcfc"/>
<rect x="1050" y="328" width="3" height="12" fill="#54fcfc"/>
<polyline points="8.8,271.9 12.5,269.3 16.3,261.5 20.1,258.4 23.8,255.2 27.6,249.0 31.3,243.3 35.1,239.6 40.1,235.5 46.4,233.9 52.6,228.6 57.6,222.4 62.7,214.5 67.7,206.7 72.7,202.0 77.7,198.2 82.7,195.7 86.5,193.2 91.5,187.9 96.5,184.4 102.8,181.9 109.0,181.6" fill="none" stroke="#ffff00" stroke-width="2" stroke-linejoin="round" stroke-linecap="round"/>
<polyline points="174.2,230.2 184.2,230.8" fill="none" stroke="#ffff00" stroke-width="2" stroke-linejoin="round" stroke-linecap="round"/>
<polyline points="190.5,231.1 195.5,229.9 200.5,229.6" fill="none" stroke="#ffff00" stroke-width="2" stroke-linejoin="round" stroke-linecap="round"/>
<polyline points="248.1,275.0 259.4,274.0 265.7,269.3 271.9,264.6 276.9,259.9 283.0,254.3" fill="none" stroke="#ffff00" stroke-width="2" stroke-linejoin="round" stroke-linecap="round"/>
<polyline points="283.0,253.8 288.0,251.3 293.0,250.0" fill="none" stroke="#ffff00" stroke-width="2" stroke-linejoin="round" stroke-linecap="round"/>
<polyline points="296.8,250.0 310.1,250.4" fill="none" stroke="#ffff00" stroke-width="2" stroke-linejoin="round" stroke-linecap="round"/>
<polyline points="312.6,250.4 323.1,250.0 328.1,248.5 333.1,242.8 338.1,236.6 343.2,230.3 348.2,224.7 353.2,220.3 358.2,216.2 364.5,213.1 370.7,210.9 377.0,209.9 382.7,210.3" fill="none" stroke="#ffff00" stroke-width="2" stroke-linejoin="round" stroke-linecap="round"/>
<polyline points="394.0,216.2 399.5,209.0 404.6,203.7 410.8,198.4 418.3,192.7 425.9,185.8 433.4,177.1 440.9,169.2 445.9,167.7 455.9,166.7 462.2,162.3 468.5,161.4 473.5,157.6 478.5,153.6 483.5,145.7 489.8,133.2 496.0,127.9 501.0,123.2 506.1,116.9 511.1,116.3 516.1,117.5" fill="none" stroke="#ffff00" stroke-width="2" stroke-linejoin="round" stroke-linecap="round"/>
<polyline points="566.0,183.2 571.0,183.2 575.0,184.8" fill="none" stroke="#ffff00" stroke-width="2" stroke-linejoin="round" stroke-linecap="round"/>
<polyline points="581.0,191.7 591.1,193.2" fill="none" stroke="#ffff00" stroke-width="2" stroke-linejoin="round" stroke-linecap="round"/>
<polyline points="624.1,212.6 630.7,210.4" fill="none" stroke="#ffff00" stroke-width="2" stroke-linejoin="round" stroke-linecap="round"/>
<polyline points="634.2,209.8 639.2,207.0 644.2,209.8" fill="none" stroke="#ffff00" stroke-width="2" stroke-linejoin="round" stroke-linecap="round"/>
<polyline points="698.8,234.3 706.4,230.8 713.9,228.0 720.1,225.5 728.9,226.1" fill="none" stroke="#ffff00" stroke-width="2" stroke-linejoin="round" stroke-linecap="round"/>
<polyline points="831.7,304.4 841.7,302.2" fill="none" stroke="#ffff00" stroke-width="2" stroke-linejoin="round" stroke-linecap="round"/>
<polyline points="897.1,326.6 905.9,329.2" fill="none" stroke="#ffff00" stroke-width="2" stroke-linejoin="round" stroke-linecap="round"/>
<polyline points="912.7,329.2 919.7,328.8 927.2,322.6 933.5,315.7 939.7,308.5 947.3,299.1 954.8,289.7 962.3,280.3 969.8,267.7 976.1,261.5 981.1,250.5 987.4,243.3 992.4,241.1 1007.4,240.5" fill="none" stroke="#ffff00" stroke-width="2" stroke-linejoin="round" stroke-linecap="round"/>
<polyline points="66.4,239.0 71.4,238.6 76.4,233.3 80.2,227.7 85.2,222.4 90.2,219.2 95.2,216.1 100.3,213.9 107.8,210.4 114.0,206.7 119.0,202.9 124.1,200.4 129.1,199.8" fill="none" stroke="#ff0000" stroke-width="2" stroke-linejoin="round" stroke-linecap="round"/>
<polyline points="132.8,200.1 140.4,202.0" fill="none" stroke="#ff0000" stroke-width="2" stroke-linejoin="round" stroke-linecap="round"/>
<polyline points="152.9,205.1 157.9,203.9 172.9,203.9" fill="none" stroke="#ff0000" stroke-width="2" stroke-linejoin="round" stroke-linecap="round"/>
<polyline points="255.6,252.1 263.2,252.1" fill="none" stroke="#ff0000" stroke-width="2" stroke-linejoin="round" stroke-linecap="round"/>
<polyline points="313.1,260.4 320.6,259.4 329.4,258.5 335.6,253.8 343.2,247.5 351.9,239.7 360.7,236.0 368.2,232.5 378.2,230.9 385.8,228.7 394.0,227.2 400.8,220.9 408.3,214.0 415.8,209.9 423.4,204.6 430.9,199.6 438.4,195.2 445.9,192.1 453.4,189.0 460.9,184.9 468.5,180.8 476.0,175.5 483.5,167.0 491.0,158.3 498.5,151.4 504.8,144.2 509.8,142.6 516.1,144.8" fill="none" stroke="#ff0000" stroke-width="2" stroke-linejoin="round" stroke-linecap="round"/>
<polyline points="527.4,145.1 535.6,146.7" fill="none" stroke="#ff0000" stroke-width="2" stroke-linejoin="round" stroke-linecap="round"/>
<polyline points="548.7,149.5 558.7,149.5" fill="none" stroke="#ff0000" stroke-width="2" stroke-linejoin="round" stroke-linecap="round"/>
<polyline points="720.1,223.0 730.2,223.9" fill="none" stroke="#ff0000" stroke-width="2" stroke-linejoin="round" stroke-linecap="round"/>
<polyline points="897.1,313.8 905.9,315.1" fill="none" stroke="#ff0000" stroke-width="2" stroke-linejoin="round" stroke-linecap="round"/>
<polyline points="912.7,315.4 931.0,315.4" fill="none" stroke="#ff0000" stroke-width="2" stroke-linejoin="round" stroke-linecap="round"/>
<polyline points="934.0,314.7 941.0,314.7 947.3,311.6 954.8,309.4 962.3,306.0 969.8,300.6 976.1,296.9 982.3,291.2 989.9,283.4 997.4,277.1 1004.9,273.1 1012.4,269.3 1019.9,266.2 1026.2,263.0 1035.0,264.6" fill="none" stroke="#ff0000" stroke-width="2" stroke-linejoin="round" stroke-linecap="round"/>
<polyline points="2.5,262.5 5.5,267.2 8.8,271.9" fill="none" stroke="#0000ff" stroke-width="2" stroke-linejoin="round" stroke-linecap="round"/>
<polyline points="109.0,181.6 115.3,184.8 120.3,187.9 125.3,191.0 130.3,197.3 135.3,205.1 140.4,210.8 145.4,216.1 150.4,219.8 156.6,221.4 162.9,225.5 169.2,230.2 174.2,230.2" fill="none" stroke="#0000ff" stroke-width="2" stroke-linejoin="round" stroke-linecap="round"/>
<polyline points="184.2,230.8 190.5,231.8" fill="none" stroke="#0000ff" stroke-width="2" stroke-linejoin="round" stroke-linecap="round"/>
<polyline points="200.5,230.2 208.0,235.5 215.5,241.2 220.6,247.4 225.6,253.7 230.6,260.9 236.8,267.2 243.1,272.5 248.1,275.0" fill="none" stroke="#0000ff" stroke-width="2" stroke-linejoin="round" stroke-linecap="round"/>
<polyline points="293.0,250.0 296.8,250.0" fill="none" stroke="#0000ff" stroke-width="2" stroke-linejoin="round" stroke-linecap="round"/>
<polyline points="310.1,250.4 312.6,250.4" fill="none" stroke="#0000ff" stroke-width="2" stroke-linejoin="round" stroke-linecap="round"/>
<polyline points="382.7,210.3 388.3,213.1 394.0,216.2" fill="none" stroke="#0000ff" stroke-width="2" stroke-linejoin="round" stroke-linecap="round"/>
<polyline points="516.1,117.5 521.1,123.8 527.4,131.6 533.6,142.6 539.9,153.6 546.2,164.5 552.4,175.5 558.7,182.7 566.0,183.3" fill="none" stroke="#0000ff" stroke-width="2" stroke-linejoin="round" stroke-linecap="round"/>
<polyline points="575.0,184.8 578.0,188.8 581.0,191.7" fill="none" stroke="#0000ff" stroke-width="2" stroke-linejoin="round" stroke-linecap="round"/>
<polyline points="591.1,193.2 596.1,195.7 603.6,202.0 611.1,208.3 616.1,212.3 624.1,212.6" fill="none" stroke="#0000ff" stroke-width="2" stroke-linejoin="round" stroke-linecap="round"/>
<polyline points="630.7,210.4 634.2,209.8" fill="none" stroke="#0000ff" stroke-width="2" stroke-linejoin="round" stroke-linecap="round"/>
<polyline points="644.2,209.8 651.2,213.0 658.7,215.1 666.3,217.0 673.8,222.4 681.3,228.6 690.1,233.9 698.8,234.3" fill="none" stroke="#0000ff" stroke-width="2" stroke-linejoin="round" stroke-linecap="round"/>
<polyline points="728.9,226.1 736.4,230.8 743.9,232.7 751.5,234.3 759.0,239.0 766.5,247.4 774.0,255.2 781.5,264.0 787.8,274.0 794.1,282.8 801.6,291.3 809.1,297.5 815.4,302.2 831.7,303.8" fill="none" stroke="#0000ff" stroke-width="2" stroke-linejoin="round" stroke-linecap="round"/>
<polyline points="841.7,302.2 849.0,302.2" fill="none" stroke="#0000ff" stroke-width="2" stroke-linejoin="round" stroke-linecap="round"/>
<polyline points="847.0,302.8 857.0,304.4 867.1,308.5 877.1,314.7 884.6,319.4 892.1,325.7 897.1,326.6" fill="none" stroke="#0000ff" stroke-width="2" stroke-linejoin="round" stroke-linecap="round"/>
<polyline points="905.9,329.2 912.7,329.2" fill="none" stroke="#0000ff" stroke-width="2" stroke-linejoin="round" stroke-linecap="round"/>
<polyline points="1007.4,240.5 1014.9,244.9 1023.7,251.1 1027.5,258.4 1033.7,272.4 1040.0,283.4 1046.2,294.4 1051.3,300.6" fill="none" stroke="#0000ff" stroke-width="2" stroke-linejoin="round" stroke-linecap="round"/>
<polyline points="2.5,182.6 6.3,187.9 11.3,195.7 16.3,203.6 21.3,210.8 25.1,214.5 30.1,217.7 35.1,220.8 40.1,223.9 45.1,228.6 50.1,233.3 55.1,236.5 60.2,238.6 66.4,239.0" fill="none" stroke="#00ff00" stroke-width="2" stroke-linejoin="round" stroke-linecap="round"/>
<polyline points="129.1,200.1 132.8,200.4" fill="none" stroke="#00ff00" stroke-width="2" stroke-linejoin="round" stroke-linecap="round"/>
<polyline points="140.4,202.3 147.9,205.1 152.9,205.1" fill="none" stroke="#00ff00" stroke-width="2" stroke-linejoin="round" stroke-linecap="round"/>
<polyline points="172.9,203.9 180.5,209.2 188.0,213.9 195.5,217.7 200.5,220.8 208.0,225.5 215.5,229.6 220.6,232.7 225.6,236.5 230.6,242.1 235.6,245.9 240.6,248.4 248.1,250.5 255.6,252.1" fill="none" stroke="#00ff00" stroke-width="2" stroke-linejoin="round" stroke-linecap="round"/>
<polyline points="263.2,252.1 270.7,253.7 278.2,255.2 283.0,255.9" fill="none" stroke="#00ff00" stroke-width="2" stroke-linejoin="round" stroke-linecap="round"/>
<polyline points="283.0,255.4 290.5,258.5 298.0,259.4 305.6,260.4 313.1,260.4" fill="none" stroke="#00ff00" stroke-width="2" stroke-linejoin="round" stroke-linecap="round"/>
<polyline points="516.1,145.1 527.4,145.1" fill="none" stroke="#00ff00" stroke-width="2" stroke-linejoin="round" stroke-linecap="round"/>
<polyline points="535.6,147.0 541.1,148.9 548.7,149.5" fill="none" stroke="#00ff00" stroke-width="2" stroke-linejoin="round" stroke-linecap="round"/>
<polyline points="558.7,149.8 566.0,152.0" fill="none" stroke="#00ff00" stroke-width="2" stroke-linejoin="round" stroke-linecap="round"/>
<polyline points="566.0,151.9 573.5,155.0 583.5,159.7 591.1,165.0 598.6,173.2 606.1,180.1 612.4,187.0 618.6,194.2 624.9,197.3 633.7,198.9 641.2,200.4 650.0,202.0 658.7,206.7 666.3,210.8 673.8,214.5 680.0,217.7 691.3,218.3 698.8,220.2 706.4,222.4 720.1,223.0" fill="none" stroke="#00ff00" stroke-width="2" stroke-linejoin="round" stroke-linecap="round"/>
<polyline points="730.2,224.9 738.9,227.7 746.5,230.2 754.0,233.3 761.5,236.5 771.5,238.6 779.0,242.1 786.6,247.4 794.1,253.1 801.6,258.4 809.1,263.7 816.6,268.7 824.1,273.1 831.7,278.1 839.2,283.4 849.0,289.1" fill="none" stroke="#00ff00" stroke-width="2" stroke-linejoin="round" stroke-linecap="round"/>
<polyline points="847.0,288.1 854.5,292.8 862.0,297.5 869.6,300.6 877.1,305.3 884.6,310.0 892.1,313.5 897.1,313.8" fill="none" stroke="#00ff00" stroke-width="2" stroke-linejoin="round" stroke-linecap="round"/>
<polyline points="905.9,315.4 912.7,315.4" fill="none" stroke="#00ff00" stroke-width="2" stroke-linejoin="round" stroke-linecap="round"/>
<polyline points="931.0,315.4 934.0,314.7" fill="none" stroke="#00ff00" stroke-width="2" stroke-linejoin="round" stroke-linecap="round"/>
<polyline points="1035.0,265.2 1045.0,266.8 1051.3,269.3" fill="none" stroke="#00ff00" stroke-width="2" stroke-linejoin="round" stroke-linecap="round"/>
<polyline points="8.8,541.0 12.5,539.0 16.3,532.7 20.1,530.2 23.8,527.7 27.6,522.7 31.3,518.2 35.1,515.2 40.1,511.9 46.4,510.7 52.6,506.4 57.6,501.4 62.7,495.1 67.7,488.9 72.7,485.1 77.7,482.1 82.7,480.1 86.5,478.1 91.5,473.8 96.5,471.1 102.8,469.1 109.0,468.8" fill="none" stroke="#ffff00" stroke-width="2" stroke-linejoin="round" stroke-linecap="round"/>
<polyline points="174.2,507.7 184.2,508.2" fill="none" stroke="#ffff00" stroke-width="2" stroke-linejoin="round" stroke-linecap="round"/>
<polyline points="190.5,508.4 195.5,507.4 200.5,507.2" fill="none" stroke="#ffff00" stroke-width="2" stroke-linejoin="round" stroke-linecap="round"/>
<polyline points="248.1,543.5 259.4,542.8 265.7,539.0 271.9,535.2 276.9,531.5 283.0,527.0" fill="none" stroke="#ffff00" stroke-width="2" stroke-linejoin="round" stroke-linecap="round"/>
<polyline points="283.0,526.6 288.0,524.6 293.0,523.6" fill="none" stroke="#ffff00" stroke-width="2" stroke-linejoin="round" stroke-linecap="round"/>
<polyline points="296.8,523.6 310.1,523.8" fill="none" stroke="#ffff00" stroke-width="2" stroke-linejoin="round" stroke-linecap="round"/>
<polyline points="312.6,523.8 323.1,523.6 328.1,522.3 333.1,517.8 338.1,512.8 343.2,507.8 348.2,503.3 353.2,499.7 358.2,496.5 364.5,494.0 370.7,492.2 377.0,491.5 382.7,491.7" fill="none" stroke="#ffff00" stroke-width="2" stroke-linejoin="round" stroke-linecap="round"/>
<polyline points="394.0,496.5 399.5,490.7 404.6,486.5 410.8,482.2 418.3,477.7 425.9,472.2 433.4,465.2 440.9,458.9 445.9,457.6 455.9,456.9 462.2,453.4 468.5,452.6 473.5,449.6 478.5,446.4 483.5,440.1 489.8,430.1 496.0,425.8 501.0,422.1 506.1,417.0 511.1,416.5 516.1,417.5" fill="none" stroke="#ffff00" stroke-width="2" stroke-linejoin="round" stroke-linecap="round"/>
<polyline points="566.0,470.1 571.0,470.1 575.0,471.3" fill="none" stroke="#ffff00" stroke-width="2" stroke-linejoin="round" stroke-linecap="round"/>
<polyline points="581.0,476.8 591.1,478.1" fill="none" stroke="#ffff00" stroke-width="2" stroke-linejoin="round" stroke-linecap="round"/>
<polyline points="624.1,493.6 630.7,491.9" fill="none" stroke="#ffff00" stroke-width="2" stroke-linejoin="round" stroke-linecap="round"/>
<polyline points="634.2,491.4 639.2,489.1 644.2,491.4" fill="none" stroke="#ffff00" stroke-width="2" stroke-linejoin="round" stroke-linecap="round"/>
<polyline points="698.8,510.9 706.4,508.2 713.9,505.9 720.1,503.9 728.9,504.4" fill="none" stroke="#ffff00" stroke-width="2" stroke-linejoin="round" stroke-linecap="round"/>
<polyline points="831.7,567.1 841.7,565.3" fill="none" stroke="#ffff00" stroke-width="2" stroke-linejoin="round" stroke-linecap="round"/>
<polyline points="897.1,584.8 905.9,586.8" fill="none" stroke="#ffff00" stroke-width="2" stroke-linejoin="round" stroke-linecap="round"/>
<polyline points="912.7,586.8 919.7,586.6 927.2,581.6 933.5,576.1 939.7,570.3 947.3,562.8 954.8,555.3 962.3,547.7 969.8,537.7 976.1,532.7 981.1,523.9 987.4,518.2 992.4,516.4 1007.4,515.9" fill="none" stroke="#ffff00" stroke-width="2" stroke-linejoin="round" stroke-linecap="round"/>
<polyline points="66.4,514.7 71.4,514.4 76.4,510.2 80.2,505.7 85.2,501.4 90.2,498.9 95.2,496.4 100.3,494.6 107.8,491.9 114.0,488.9 119.0,485.9 124.1,483.9 129.1,483.4" fill="none" stroke="#ff0000" stroke-width="2" stroke-linejoin="round" stroke-linecap="round"/>
<polyline points="132.8,483.6 140.4,485.1" fill="none" stroke="#ff0000" stroke-width="2" stroke-linejoin="round" stroke-linecap="round"/>
<polyline points="152.9,487.6 157.9,486.6 172.9,486.6" fill="none" stroke="#ff0000" stroke-width="2" stroke-linejoin="round" stroke-linecap="round"/>
<polyline points="255.6,525.2 263.2,525.2" fill="none" stroke="#ff0000" stroke-width="2" stroke-linejoin="round" stroke-linecap="round"/>
<polyline points="313.1,531.8 320.6,531.1 329.4,530.3 335.6,526.6 343.2,521.6 351.9,515.3 360.7,512.3 368.2,509.5 378.2,508.3 385.8,506.5 394.0,505.3 400.8,500.3 408.3,494.7 415.8,491.5 423.4,487.2 430.9,483.2 438.4,479.7 445.9,477.2 453.4,474.7 460.9,471.4 468.5,468.2 476.0,463.9 483.5,457.1 491.0,450.1 498.5,444.6 504.8,438.8 509.8,437.6 516.1,439.3" fill="none" stroke="#ff0000" stroke-width="2" stroke-linejoin="round" stroke-linecap="round"/>
<polyline points="527.4,439.6 535.6,440.9" fill="none" stroke="#ff0000" stroke-width="2" stroke-linejoin="round" stroke-linecap="round"/>
<polyline points="548.7,443.1 558.7,443.1" fill="none" stroke="#ff0000" stroke-width="2" stroke-linejoin="round" stroke-linecap="round"/>
<polyline points="720.1,501.9 730.2,502.7" fill="none" stroke="#ff0000" stroke-width="2" stroke-linejoin="round" stroke-linecap="round"/>
<polyline points="897.1,574.6 905.9,575.6" fill="none" stroke="#ff0000" stroke-width="2" stroke-linejoin="round" stroke-linecap="round"/>
<polyline points="912.7,575.8 931.0,575.8" fill="none" stroke="#ff0000" stroke-width="2" stroke-linejoin="round" stroke-linecap="round"/>
<polyline points="934.0,575.3 941.0,575.3 947.3,572.8 954.8,571.1 962.3,568.3 969.8,564.0 976.1,561.0 982.3,556.5 989.9,550.3 997.4,545.2 1004.9,542.0 1012.4,539.0 1019.9,536.5 1026.2,534.0 1035.0,535.2" fill="none" stroke="#ff0000" stroke-width="2" stroke-linejoin="round" stroke-linecap="round"/>
<polyline points="2.5,533.5 5.5,537.2 8.8,541.0" fill="none" stroke="#0000ff" stroke-width="2" stroke-linejoin="round" stroke-linecap="round"/>
<polyline points="109.0,468.8 115.3,471.3 120.3,473.8 125.3,476.3 130.3,481.4 135.3,487.6 140.4,492.1 145.4,496.4 150.4,499.4 156.6,500.7 162.9,503.9 169.2,507.7 174.2,507.7" fill="none" stroke="#0000ff" stroke-width="2" stroke-linejoin="round" stroke-linecap="round"/>
<polyline points="184.2,508.2 190.5,508.9" fill="none" stroke="#0000ff" stroke-width="2" stroke-linejoin="round" stroke-linecap="round"/>
<polyline points="200.5,507.7 208.0,511.9 215.5,516.4 220.6,521.5 225.6,526.5 230.6,532.2 236.8,537.2 243.1,541.5 248.1,543.5" fill="none" stroke="#0000ff" stroke-width="2" stroke-linejoin="round" stroke-linecap="round"/>
<polyline points="293.0,523.6 296.8,523.6" fill="none" stroke="#0000ff" stroke-width="2" stroke-linejoin="round" stroke-linecap="round"/>
<polyline points="310.1,523.8 312.6,523.8" fill="none" stroke="#0000ff" stroke-width="2" stroke-linejoin="round" stroke-linecap="round"/>
<polyline points="382.7,491.7 388.3,494.0 394.0,496.5" fill="none" stroke="#0000ff" stroke-width="2" stroke-linejoin="round" stroke-linecap="round"/>
<polyline points="516.1,417.5 521.1,422.6 527.4,428.8 533.6,437.6 539.9,446.4 546.2,455.1 552.4,463.9 558.7,469.7 566.0,470.2" fill="none" stroke="#0000ff" stroke-width="2" stroke-linejoin="round" stroke-linecap="round"/>
<polyline points="575.0,471.3 578.0,474.6 581.0,476.8" fill="none" stroke="#0000ff" stroke-width="2" stroke-linejoin="round" stroke-linecap="round"/>
<polyline points="591.1,478.1 596.1,480.1 603.6,485.1 611.1,490.1 616.1,493.4 624.1,493.6" fill="none" stroke="#0000ff" stroke-width="2" stroke-linejoin="round" stroke-linecap="round"/>
<polyline points="630.7,491.9 634.2,491.4" fill="none" stroke="#0000ff" stroke-width="2" stroke-linejoin="round" stroke-linecap="round"/>
<polyline points="644.2,491.4 651.2,493.9 658.7,495.6 666.3,497.1 673.8,501.4 681.3,506.4 690.1,510.7 698.8,510.9" fill="none" stroke="#0000ff" stroke-width="2" stroke-linejoin="round" stroke-linecap="round"/>
<polyline points="728.9,504.4 736.4,508.2 743.9,509.7 751.5,510.9 759.0,514.7 766.5,521.5 774.0,527.7 781.5,534.7 787.8,542.8 794.1,549.8 801.6,556.5 809.1,561.6 815.4,565.3 831.7,566.6" fill="none" stroke="#0000ff" stroke-width="2" stroke-linejoin="round" stroke-linecap="round"/>
<polyline points="841.7,565.3 849.0,565.3" fill="none" stroke="#0000ff" stroke-width="2" stroke-linejoin="round" stroke-linecap="round"/>
<polyline points="847.0,565.8 857.0,567.0 867.1,570.3 877.1,575.3 884.6,579.1 892.1,584.1 897.1,584.8" fill="none" stroke="#0000ff" stroke-width="2" stroke-linejoin="round" stroke-linecap="round"/>
<polyline points="905.9,586.8 912.7,586.8" fill="none" stroke="#0000ff" stroke-width="2" stroke-linejoin="round" stroke-linecap="round"/>
<polyline points="1007.4,515.9 1014.9,519.4 1023.7,524.4 1027.5,530.2 1033.7,541.5 1040.0,550.3 1046.2,559.0 1051.3,564.0" fill="none" stroke="#0000ff" stroke-width="2" stroke-linejoin="round" stroke-linecap="round"/>
<polyline points="2.5,469.6 6.3,473.8 11.3,480.1 16.3,486.4 21.3,492.1 25.1,495.1 30.1,497.6 35.1,500.2 40.1,502.7 45.1,506.4 50.1,510.2 55.1,512.7 60.2,514.4 66.4,514.7" fill="none" stroke="#00ff00" stroke-width="2" stroke-linejoin="round" stroke-linecap="round"/>
<polyline points="129.1,483.6 132.8,483.9" fill="none" stroke="#00ff00" stroke-width="2" stroke-linejoin="round" stroke-linecap="round"/>
<polyline points="140.4,485.4 147.9,487.6 152.9,487.6" fill="none" stroke="#00ff00" stroke-width="2" stroke-linejoin="round" stroke-linecap="round"/>
<polyline points="172.9,486.6 180.5,490.9 188.0,494.6 195.5,497.6 200.5,500.2 208.0,503.9 215.5,507.2 220.6,509.7 225.6,512.7 230.6,517.2 235.6,520.2 240.6,522.2 248.1,524.0 255.6,525.2" fill="none" stroke="#00ff00" stroke-width="2" stroke-linejoin="round" stroke-linecap="round"/>
<polyline points="263.2,525.2 270.7,526.5 278.2,527.7 283.0,528.2" fill="none" stroke="#00ff00" stroke-width="2" stroke-linejoin="round" stroke-linecap="round"/>
<polyline points="283.0,527.8 290.5,530.3 298.0,531.1 305.6,531.8 313.1,531.8" fill="none" stroke="#00ff00" stroke-width="2" stroke-linejoin="round" stroke-linecap="round"/>
<polyline points="516.1,439.6 527.4,439.6" fill="none" stroke="#00ff00" stroke-width="2" stroke-linejoin="round" stroke-linecap="round"/>
<polyline points="535.6,441.1 541.1,442.6 548.7,443.1" fill="none" stroke="#00ff00" stroke-width="2" stroke-linejoin="round" stroke-linecap="round"/>
<polyline points="558.7,443.4 566.0,445.1" fill="none" stroke="#00ff00" stroke-width="2" stroke-linejoin="round" stroke-linecap="round"/>
<polyline points="566.0,445.0 573.5,447.5 583.5,451.3 591.1,455.5 598.6,462.1 606.1,467.6 612.4,473.1 618.6,478.8 624.9,481.4 633.7,482.6 641.2,483.9 650.0,485.1 658.7,488.9 666.3,492.1 673.8,495.1 680.0,497.6 691.3,498.1 698.8,499.6 706.4,501.4 720.1,501.9" fill="none" stroke="#00ff00" stroke-width="2" stroke-linejoin="round" stroke-linecap="round"/>
<polyline points="730.2,503.4 738.9,505.7 746.5,507.7 754.0,510.2 761.5,512.7 771.5,514.4 779.0,517.2 786.6,521.5 794.1,526.0 801.6,530.2 809.1,534.5 816.6,538.5 824.1,542.0 831.7,546.0 839.2,550.3 849.0,554.8" fill="none" stroke="#00ff00" stroke-width="2" stroke-linejoin="round" stroke-linecap="round"/>
<polyline points="847.0,554.0 854.5,557.8 862.0,561.5 869.6,564.0 877.1,567.8 884.6,571.6 892.1,574.3 897.1,574.6" fill="none" stroke="#00ff00" stroke-width="2" stroke-linejoin="round" stroke-linecap="round"/>
<polyline points="905.9,575.8 912.7,575.8" fill="none" stroke="#00ff00" stroke-width="2" stroke-linejoin="round" stroke-linecap="round"/>
<polyline points="931.0,575.8 934.0,575.3" fill="none" stroke="#00ff00" stroke-width="2" stroke-linejoin="round" stroke-linecap="round"/>
<polyline points="1035.0,535.7 1045.0,537.0 1051.3,539.0" fill="none" stroke="#00ff00" stroke-width="2" stroke-linejoin="round" stroke-linecap="round"/>
<g font-family='"Liberation Sans","WenQuanYi Zen Hei",sans-serif' shape-rendering="auto" clip-path="url(#cm)">
<clipPath id="cm"><rect x="0" y="20" width="1070" height="610"/></clipPath>
<text x="65.9" y="208.4" font-size="11" fill="#ff00ff" stroke="#ff00ff" stroke-width="0.3">★</text><text x="75.6" y="208.9" font-size="12" fill="#ff00ff" stroke="#ff00ff" stroke-width="0.25">加仓</text>
<text x="65.9" y="489.9" font-size="11" fill="#ff00ff" stroke="#ff00ff" stroke-width="0.3">★</text><text x="75.6" y="490.4" font-size="12" fill="#ff00ff" stroke="#ff00ff" stroke-width="0.25">加仓</text>
<text x="151.9" y="280.0" font-size="11" fill="#ffff00" stroke="#ffff00" stroke-width="0.3">★</text><text x="161.6" y="280.5" font-size="12" fill="#ffff00" stroke="#ffff00" stroke-width="0.25">短买</text>
<text x="151.9" y="548.0" font-size="11" fill="#ffff00" stroke="#ffff00" stroke-width="0.3">★</text><text x="161.6" y="548.5" font-size="12" fill="#ffff00" stroke="#ffff00" stroke-width="0.25">短买</text>
<text x="183.8" y="261.2" font-size="11" fill="#ffff00" stroke="#ffff00" stroke-width="0.3">★</text><text x="193.5" y="261.7" font-size="12" fill="#ffff00" stroke="#ffff00" stroke-width="0.25">短买</text>
<text x="183.8" y="533.0" font-size="11" fill="#ffff00" stroke="#ffff00" stroke-width="0.3">★</text><text x="193.5" y="533.5" font-size="12" fill="#ffff00" stroke="#ffff00" stroke-width="0.25">短买</text>
<text x="194.8" y="256.5" font-size="11" fill="#ffff00" stroke="#ffff00" stroke-width="0.3">★</text><text x="204.5" y="257.0" font-size="12" fill="#ffff00" stroke="#ffff00" stroke-width="0.25">短买</text>
<text x="194.8" y="530.5" font-size="11" fill="#ffff00" stroke="#ffff00" stroke-width="0.3">★</text><text x="204.5" y="531.0" font-size="12" fill="#ffff00" stroke="#ffff00" stroke-width="0.25">短买</text>
<text x="253.7" y="281.4" font-size="11" fill="#ff00ff" stroke="#ff00ff" stroke-width="0.3">★</text><text x="263.4" y="281.9" font-size="12" fill="#ff00ff" stroke="#ff00ff" stroke-width="0.25">加仓</text>
<text x="253.7" y="549.3" font-size="11" fill="#ff00ff" stroke="#ff00ff" stroke-width="0.3">★</text><text x="263.4" y="549.8" font-size="12" fill="#ff00ff" stroke="#ff00ff" stroke-width="0.25">加仓</text>
<text x="231.3" y="331.7" font-size="11" fill="#ffff00" stroke="#ffff00" stroke-width="0.3">★</text><text x="241.0" y="332.2" font-size="12" fill="#ffff00" stroke="#ffff00" stroke-width="0.25">短买</text>
<text x="231.3" y="588.9" font-size="11" fill="#ffff00" stroke="#ffff00" stroke-width="0.3">★</text><text x="241.0" y="589.4" font-size="12" fill="#ffff00" stroke="#ffff00" stroke-width="0.25">短买</text>
<text x="312.0" y="280.1" font-size="11" fill="#ff00ff" stroke="#ff00ff" stroke-width="0.3">★</text><text x="321.7" y="280.6" font-size="12" fill="#ff00ff" stroke="#ff00ff" stroke-width="0.25">加仓</text>
<text x="312.0" y="549.4" font-size="11" fill="#ff00ff" stroke="#ff00ff" stroke-width="0.3">★</text><text x="321.7" y="549.9" font-size="12" fill="#ff00ff" stroke="#ff00ff" stroke-width="0.25">加仓</text>
<text x="397.7" y="232.2" font-size="11" fill="#ff00ff" stroke="#ff00ff" stroke-width="0.3">★</text><text x="407.4" y="232.7" font-size="12" fill="#ff00ff" stroke="#ff00ff" stroke-width="0.25">加仓</text>
<text x="397.7" y="510.5" font-size="11" fill="#ff00ff" stroke="#ff00ff" stroke-width="0.3">★</text><text x="407.4" y="511.0" font-size="12" fill="#ff00ff" stroke="#ff00ff" stroke-width="0.25">加仓</text>
<text x="451.8" y="190.9" font-size="11" fill="#ff00ff" stroke="#ff00ff" stroke-width="0.3">★</text><text x="461.5" y="191.4" font-size="12" fill="#ff00ff" stroke="#ff00ff" stroke-width="0.25">加仓</text>
<text x="451.8" y="476.7" font-size="11" fill="#ff00ff" stroke="#ff00ff" stroke-width="0.3">★</text><text x="461.5" y="477.2" font-size="12" fill="#ff00ff" stroke="#ff00ff" stroke-width="0.25">加仓</text>
<text x="525.6" y="220.0" font-size="11" fill="#ffff00" stroke="#ffff00" stroke-width="0.3">★</text><text x="535.3" y="220.5" font-size="12" fill="#ffff00" stroke="#ffff00" stroke-width="0.25">短买</text>
<text x="525.6" y="501.2" font-size="11" fill="#ffff00" stroke="#ffff00" stroke-width="0.3">★</text><text x="535.3" y="501.7" font-size="12" fill="#ffff00" stroke="#ffff00" stroke-width="0.25">短买</text>
<text x="542.7" y="229.5" font-size="11" fill="#ffff00" stroke="#ffff00" stroke-width="0.3">★</text><text x="552.4" y="230.0" font-size="12" fill="#ffff00" stroke="#ffff00" stroke-width="0.25">短买</text>
<text x="542.7" y="508.5" font-size="11" fill="#ffff00" stroke="#ffff00" stroke-width="0.3">★</text><text x="552.4" y="509.0" font-size="12" fill="#ffff00" stroke="#ffff00" stroke-width="0.25">短买</text>
<text x="564.3" y="215.6" font-size="11" fill="#ffff00" stroke="#ffff00" stroke-width="0.3">★</text><text x="574.0" y="216.1" font-size="12" fill="#ffff00" stroke="#ffff00" stroke-width="0.25">短买</text>
<text x="564.3" y="497.4" font-size="11" fill="#ffff00" stroke="#ffff00" stroke-width="0.3">★</text><text x="574.0" y="497.9" font-size="12" fill="#ffff00" stroke="#ffff00" stroke-width="0.25">短买</text>
<text x="584.8" y="250.2" font-size="11" fill="#ffff00" stroke="#ffff00" stroke-width="0.3">★</text><text x="594.5" y="250.7" font-size="12" fill="#ffff00" stroke="#ffff00" stroke-width="0.25">短买</text>
<text x="584.8" y="524.2" font-size="11" fill="#ffff00" stroke="#ffff00" stroke-width="0.3">★</text><text x="594.5" y="524.7" font-size="12" fill="#ffff00" stroke="#ffff00" stroke-width="0.25">短买</text>
<text x="596.0" y="261.3" font-size="11" fill="#ffff00" stroke="#ffff00" stroke-width="0.3">★</text><text x="605.7" y="261.8" font-size="12" fill="#ffff00" stroke="#ffff00" stroke-width="0.25">短买</text>
<text x="596.0" y="533.0" font-size="11" fill="#ffff00" stroke="#ffff00" stroke-width="0.3">★</text><text x="605.7" y="533.5" font-size="12" fill="#ffff00" stroke="#ffff00" stroke-width="0.25">短买</text>
<text x="612.0" y="270.1" font-size="11" fill="#ffff00" stroke="#ffff00" stroke-width="0.3">★</text><text x="621.7" y="270.6" font-size="12" fill="#ffff00" stroke="#ffff00" stroke-width="0.25">短买</text>
<text x="612.0" y="541.2" font-size="11" fill="#ffff00" stroke="#ffff00" stroke-width="0.3">★</text><text x="621.7" y="541.7" font-size="12" fill="#ffff00" stroke="#ffff00" stroke-width="0.25">短买</text>
<text x="628.0" y="249.7" font-size="11" fill="#ff00ff" stroke="#ff00ff" stroke-width="0.3">★</text><text x="637.7" y="250.2" font-size="12" fill="#ff00ff" stroke="#ff00ff" stroke-width="0.25">加仓</text>
<text x="628.0" y="523.7" font-size="11" fill="#ff00ff" stroke="#ff00ff" stroke-width="0.3">★</text><text x="637.7" y="524.2" font-size="12" fill="#ff00ff" stroke="#ff00ff" stroke-width="0.25">加仓</text>
<text x="659.8" y="277.9" font-size="11" fill="#ffff00" stroke="#ffff00" stroke-width="0.3">★</text><text x="669.5" y="278.4" font-size="12" fill="#ffff00" stroke="#ffff00" stroke-width="0.25">短买</text>
<text x="659.8" y="546.8" font-size="11" fill="#ffff00" stroke="#ffff00" stroke-width="0.3">★</text><text x="669.5" y="547.3" font-size="12" fill="#ffff00" stroke="#ffff00" stroke-width="0.25">短买</text>
<text x="676.0" y="283.4" font-size="11" fill="#ffff00" stroke="#ffff00" stroke-width="0.3">★</text><text x="685.7" y="283.9" font-size="12" fill="#ffff00" stroke="#ffff00" stroke-width="0.25">短买</text>
<text x="676.0" y="551.8" font-size="11" fill="#ffff00" stroke="#ffff00" stroke-width="0.3">★</text><text x="685.7" y="552.3" font-size="12" fill="#ffff00" stroke="#ffff00" stroke-width="0.25">短买</text>
<text x="773.1" y="309.7" font-size="11" fill="#ffff00" stroke="#ffff00" stroke-width="0.3">★</text><text x="782.8" y="310.2" font-size="12" fill="#ffff00" stroke="#ffff00" stroke-width="0.25">短买</text>
<text x="773.1" y="572.3" font-size="11" fill="#ffff00" stroke="#ffff00" stroke-width="0.3">★</text><text x="782.8" y="572.8" font-size="12" fill="#ffff00" stroke="#ffff00" stroke-width="0.25">短买</text>
<text x="821.1" y="328.5" font-size="11" fill="#ff00ff" stroke="#ff00ff" stroke-width="0.3">★</text><text x="830.8" y="329.0" font-size="12" fill="#ff00ff" stroke="#ff00ff" stroke-width="0.25">加仓</text>
<text x="821.1" y="587.4" font-size="11" fill="#ff00ff" stroke="#ff00ff" stroke-width="0.3">★</text><text x="830.8" y="587.9" font-size="12" fill="#ff00ff" stroke="#ff00ff" stroke-width="0.25">加仓</text>
<text x="1012.6" y="295.8" font-size="11" fill="#ffff00" stroke="#ffff00" stroke-width="0.3">★</text><text x="1022.3" y="296.3" font-size="12" fill="#ffff00" stroke="#ffff00" stroke-width="0.25">短买</text>
<text x="1012.6" y="561.3" font-size="11" fill="#ffff00" stroke="#ffff00" stroke-width="0.3">★</text><text x="1022.3" y="561.8" font-size="12" fill="#ffff00" stroke="#ffff00" stroke-width="0.25">短买</text>
<text x="1045.3" y="351.6" font-size="11" fill="#ffff00" stroke="#ffff00" stroke-width="0.3">★</text><text x="1055.0" y="352.1" font-size="12" fill="#ffff00" stroke="#ffff00" stroke-width="0.25">短买</text>
<text x="1045.3" y="604.4" font-size="11" fill="#ffff00" stroke="#ffff00" stroke-width="0.3">★</text><text x="1055.0" y="604.9" font-size="12" fill="#ffff00" stroke="#ffff00" stroke-width="0.25">短买</text>
</g>
<rect x="0" y="19" width="1122" height="1" fill="#c80000"/>
<rect x="0" y="0" width="1" height="20" fill="#c80000"/>
<rect x="23" y="0" width="1" height="20" fill="#c80000"/>
<rect x="805" y="0" width="1" height="19" fill="#c80000"/>
<rect x="839" y="0" width="1" height="19" fill="#c80000"/>
<rect x="874" y="0" width="1" height="19" fill="#c80000"/>
<rect x="909" y="0" width="1" height="19" fill="#c80000"/>
<rect x="944" y="0" width="1" height="19" fill="#c80000"/>
<rect x="979" y="0" width="1" height="19" fill="#c80000"/>
<rect x="1014" y="0" width="1" height="19" fill="#c80000"/>
<rect x="1049" y="0" width="1" height="19" fill="#c80000"/>
<rect x="1084" y="0" width="1" height="19" fill="#c80000"/>
<rect x="1070" y="20" width="1" height="376" fill="#c80000"/>
<rect x="1070" y="396" width="2" height="235" fill="#c80000"/>
<rect x="1121" y="0" width="1" height="396" fill="#c80000"/>
<rect x="1120" y="396" width="2" height="254" fill="#c80000"/>
<rect x="0" y="396" width="1071" height="1" fill="#c80000"/>
<rect x="1070" y="396" width="52" height="2" fill="#c80000"/>
<rect x="1122" y="25" width="8" height="1" fill="#c80000"/>
<rect x="1122" y="45" width="8" height="1" fill="#c80000"/>
<rect x="1122" y="142" width="8" height="1" fill="#c80000"/>
<rect x="1122" y="239" width="8" height="1" fill="#c80000"/>
<rect x="1122" y="336" width="8" height="1" fill="#c80000"/>
<rect x="1122" y="397" width="8" height="1" fill="#c80000"/>
<rect x="1122" y="417" width="8" height="1" fill="#c80000"/>
<rect x="1122" y="436" width="8" height="1" fill="#c80000"/>
<rect x="1071" y="37" width="5" height="1" fill="#c80000"/>
<rect x="1071" y="60" width="2" height="1" fill="#c80000"/>
<rect x="1071" y="84" width="5" height="1" fill="#c80000"/>
<rect x="1071" y="107" width="2" height="1" fill="#c80000"/>
<rect x="1071" y="131" width="5" height="1" fill="#c80000"/>
<rect x="1071" y="154" width="2" height="1" fill="#c80000"/>
<rect x="1071" y="178" width="5" height="1" fill="#c80000"/>
<rect x="1071" y="201" width="2" height="1" fill="#c80000"/>
<rect x="1071" y="225" width="5" height="1" fill="#c80000"/>
<rect x="1071" y="248" width="2" height="1" fill="#c80000"/>
<rect x="1071" y="272" width="5" height="1" fill="#c80000"/>
<rect x="1071" y="295" width="2" height="1" fill="#c80000"/>
<rect x="1071" y="319" width="5" height="1" fill="#c80000"/>
<rect x="1071" y="342" width="2" height="1" fill="#c80000"/>
<rect x="1071" y="366" width="5" height="1" fill="#c80000"/>
<rect x="1071" y="428" width="5" height="1" fill="#c80000"/>
<rect x="1071" y="447" width="2" height="1" fill="#c80000"/>
<rect x="1071" y="466" width="5" height="1" fill="#c80000"/>
<rect x="1071" y="485" width="2" height="1" fill="#c80000"/>
<rect x="1071" y="504" width="5" height="1" fill="#c80000"/>
<rect x="1071" y="523" width="2" height="1" fill="#c80000"/>
<rect x="1071" y="541" width="5" height="1" fill="#c80000"/>
<rect x="1071" y="560" width="2" height="1" fill="#c80000"/>
<rect x="1071" y="579" width="5" height="1" fill="#c80000"/>
<rect x="1071" y="598" width="2" height="1" fill="#c80000"/>
<rect x="0" y="630" width="1071" height="1" fill="#c80000"/>
<rect x="0" y="646" width="1071" height="1" fill="#c80000"/>
<rect x="60" y="631" width="1" height="15" fill="#c80000"/>
<rect x="162" y="631" width="1" height="15" fill="#c80000"/>
<rect x="269" y="631" width="1" height="15" fill="#c80000"/>
<rect x="392" y="631" width="1" height="15" fill="#c80000"/>
<rect x="504" y="631" width="1" height="15" fill="#c80000"/>
<rect x="713" y="631" width="1" height="15" fill="#c80000"/>
<rect x="820" y="631" width="1" height="15" fill="#c80000"/>
<rect x="943" y="631" width="1" height="15" fill="#c80000"/>
<rect x="111" y="631" width="1" height="2" fill="#c80000"/>
<rect x="137" y="631" width="1" height="2" fill="#c80000"/>
<rect x="189" y="631" width="1" height="2" fill="#c80000"/>
<rect x="216" y="631" width="1" height="2" fill="#c80000"/>
<rect x="242" y="631" width="1" height="2" fill="#c80000"/>
<rect x="300" y="631" width="1" height="2" fill="#c80000"/>
<rect x="332" y="631" width="1" height="2" fill="#c80000"/>
<rect x="362" y="631" width="1" height="2" fill="#c80000"/>
<rect x="421" y="631" width="1" height="2" fill="#c80000"/>
<rect x="448" y="631" width="1" height="2" fill="#c80000"/>
<rect x="477" y="631" width="1" height="2" fill="#c80000"/>
<rect x="535" y="631" width="1" height="2" fill="#c80000"/>
<rect x="563" y="631" width="1" height="2" fill="#c80000"/>
<rect x="668" y="631" width="1" height="2" fill="#c80000"/>
<rect x="690" y="631" width="1" height="2" fill="#c80000"/>
<rect x="740" y="631" width="1" height="2" fill="#c80000"/>
<rect x="767" y="631" width="1" height="2" fill="#c80000"/>
<rect x="794" y="631" width="1" height="2" fill="#c80000"/>
<rect x="851" y="631" width="1" height="2" fill="#c80000"/>
<rect x="882" y="631" width="1" height="2" fill="#c80000"/>
<rect x="912" y="631" width="1" height="2" fill="#c80000"/>
<rect x="42" y="647" width="1" height="3" fill="#c80000"/>
<rect x="73" y="647" width="1" height="3" fill="#c80000"/>
<rect x="115" y="647" width="1" height="3" fill="#c80000"/>
<rect x="144" y="647" width="1" height="3" fill="#c80000"/>
<rect x="177" y="647" width="1" height="3" fill="#c80000"/>
<rect x="207" y="647" width="1" height="3" fill="#c80000"/>
<rect x="241" y="647" width="1" height="3" fill="#c80000"/>
<rect x="282" y="647" width="1" height="3" fill="#c80000"/>
<rect x="320" y="647" width="1" height="3" fill="#c80000"/>
<rect x="350" y="647" width="1" height="3" fill="#c80000"/>
<rect x="390" y="647" width="1" height="3" fill="#c80000"/>
<rect x="420" y="647" width="1" height="3" fill="#c80000"/>
<rect x="450" y="647" width="1" height="3" fill="#c80000"/>
<rect x="490" y="647" width="1" height="3" fill="#c80000"/>
<rect x="520" y="647" width="1" height="3" fill="#c80000"/>
<rect x="560" y="647" width="1" height="3" fill="#c80000"/>
<rect x="600" y="647" width="1" height="3" fill="#c80000"/>
<rect x="640" y="647" width="1" height="3" fill="#c80000"/>
<rect x="696" y="647" width="1" height="3" fill="#c80000"/>
<rect x="735" y="647" width="1" height="3" fill="#c80000"/>
<rect x="772" y="647" width="1" height="3" fill="#c80000"/>
<rect x="808" y="647" width="1" height="3" fill="#c80000"/>
<rect x="847" y="647" width="1" height="3" fill="#c80000"/>
<rect x="871" y="647" width="1" height="3" fill="#c80000"/>
<rect x="900" y="647" width="1" height="3" fill="#c80000"/>
<rect x="940" y="647" width="1" height="3" fill="#c80000"/>
<rect x="8" y="648" width="1" height="2" fill="#d0d0d0"/>
<rect x="11" y="648" width="1" height="2" fill="#d0d0d0"/>
<rect x="14" y="648" width="1" height="2" fill="#d0d0d0"/>
<rect x="17" y="648" width="1" height="2" fill="#d0d0d0"/>
<rect x="51" y="648" width="1" height="2" fill="#d0d0d0"/>
<rect x="828" y="648" width="1" height="2" fill="#d0d0d0"/>
<rect x="845" y="649" width="8" height="1" fill="#54fcfc"/><rect x="857" y="649" width="9" height="1" fill="#54fcfc"/>
<rect x="583" y="631" width="79" height="15" fill="#000080"/>
<rect x="1072" y="475" width="48" height="15" fill="#000080"/>
</svg>
<div class="t" style="left:28px;top:2px;">分时</div>
<div class="t" style="left:61px;top:2px;">1分钟</div>
<div class="t" style="left:100px;top:2px;">5分钟</div>
<div class="t" style="left:139px;top:2px;">15分钟</div>
<div class="t" style="left:185px;top:2px;">30分钟</div>
<div class="t" style="left:231px;top:2px;">60分钟</div>
<div class="t" style="left:278px;top:2px;color:#54fcfc">日线</div>
<div class="t" style="left:311px;top:2px;">周线</div>
<div class="t" style="left:345px;top:2px;">月线</div>
<div class="t" style="left:378px;top:2px;">多周期</div>
<div class="t" style="left:422px;top:2px;">更多&gt;</div>
<div class="t" style="left:811px;top:2px;">复权</div>
<div class="t" style="left:845px;top:2px;">叠加</div>
<div class="t" style="left:880px;top:2px;">多股</div>
<div class="t" style="left:915px;top:2px;">统计</div>
<div class="t" style="left:950px;top:2px;">画线</div>
<div class="t" style="left:987px;top:2px;">F10</div>
<div class="t" style="left:1020px;top:2px;">标记</div>
<div class="t" style="left:1052px;top:2px;">+自选</div>
<div class="t" style="left:1091px;top:2px;">返回</div>
<div style="position:absolute;left:5px;top:3px;width:10px;height:9px;border:1px solid #888;border-radius:3px"></div>
<div style="position:absolute;left:12px;top:5px;width:3px;height:7px;background:#999"></div>
<div class="t" style="left:4px;top:22px;color:#d8d8d8">中信海直(日线.前复权)</div>
<svg style="position:absolute;left:128px;top:23px" width="13" height="13"><circle cx="6.5" cy="6.5" r="6" fill="#808080"/><path d="M3.5 5.5 L6.5 8.5 L9.5 5.5" stroke="#000" stroke-width="1.4" fill="none"/></svg>
<div class="t" style="left:145px;top:22px;color:#ffff00;letter-spacing:-0.35px">MA5: 20.40</div>
<div class="t" style="left:210px;top:22px;color:#ff0000;letter-spacing:-0.25px">MA10: 21.06</div>
<div class="t" style="left:282px;top:22px;color:#0000ff;letter-spacing:-0.25px">MA20: 20.40</div>
<div class="t" style="left:354px;top:22px;color:#00ff00;letter-spacing:-0.25px">MA60: 21.06</div>
<svg style="position:absolute;left:1036px;top:23px" width="32" height="13"><path d="M6.5 1.5 L11.5 6.5 L6.5 11.5 L1.5 6.5 Z" stroke="#787878" stroke-width="1" fill="none"/><rect x="19.5" y="1.5" width="11" height="10" rx="2.5" stroke="#909090" fill="none"/><rect x="26" y="3" width="3" height="7" fill="#a0a0a0"/></svg>
<div class="ax" style="top:31px">26.00</div>
<div class="ax" style="top:78px">25.00</div>
<div class="ax" style="top:125px">24.00</div>
<div class="ax" style="top:172px">23.00</div>
<div class="ax" style="top:219px">22.00</div>
<div class="ax" style="top:266px">21.00</div>
<div class="ax" style="top:313px">20.00</div>
<div class="ax" style="top:360px">19.00</div>
<div class="ax" style="top:422px">24.00</div>
<div class="ax" style="top:460px">23.00</div>
<div class="ax" style="top:498px">22.00</div>
<div class="ax" style="top:535px">21.00</div>
<div class="ax" style="top:573px">20.00</div>
<div class="t" style="left:1071px;top:476px;color:#e0e0e0">22.36</div>
<svg style="position:absolute;left:2px;top:399px" width="13" height="13"><circle cx="6.5" cy="6.5" r="6" fill="#808080"/><path d="M3.5 5.5 L6.5 8.5 L9.5 5.5" stroke="#000" stroke-width="1.4" fill="none"/></svg>
<div class="t" style="left:18px;top:398px;color:#d8d8d8">股朋指标网</div>
<div class="t" style="left:83px;top:398px;color:#ffff00">: 20.40</div>
<div class="t" style="left:125px;top:398px;color:#ff0000">: 21.06</div>
<div class="t" style="left:167px;top:398px;color:#0000ff">: 20.40</div>
<div class="t" style="left:209px;top:398px;color:#00ff00">: 21.06</div>
<div class="t" style="left:1px;top:615px;color:#808080">用到未来数据</div>
<div class="t" style="left:3px;top:632px;color:#ff3232">2025年</div>
<div class="t" style="left:62px;top:632px;color:#ff3232">5</div>
<div class="t" style="left:164px;top:632px;color:#ff3232">6</div>
<div class="t" style="left:271px;top:632px;color:#ff3232">7</div>
<div class="t" style="left:394px;top:632px;color:#ff3232">8</div>
<div class="t" style="left:506px;top:632px;color:#ff3232">9</div>
<div class="t" style="left:715px;top:632px;color:#ff3232">11</div>
<div class="t" style="left:822px;top:632px;color:#ff3232">12</div>
<div class="t" style="left:944px;top:632px;color:#ff3232">1</div>
<div class="t" style="left:585px;top:632px;color:#f0f0f0">2025/09/22/一</div>
<div class="s" style="top:26px">委</div>
<div class="s" style="top:48px">卖</div>
<div class="s" style="top:67px">卖</div>
<div class="s" style="top:86px">卖</div>
<div class="s" style="top:105px">卖</div>
<div class="s" style="top:124px">卖</div>
<div class="s" style="top:145px">买</div>
<div class="s" style="top:164px">买</div>
<div class="s" style="top:183px">买</div>
<div class="s" style="top:202px">买</div>
<div class="s" style="top:221px">买</div>
<div class="s" style="top:243px">现</div>
<div class="s" style="top:262px">涨</div>
<div class="s" style="top:281px">涨</div>
<div class="s" style="top:300px">总</div>
<div class="s" style="top:318px">外</div>
<div class="s" style="top:340px">换</div>
<div class="s" style="top:359px">净</div>
<div class="s" style="top:378px">收</div>
<div class="s" style="top:399px;color:#ffff00">自</div>
<div class="s" style="top:420px;">买</div>
<div class="one" style="top:439px">1</div>
<div class="one" style="top:457px">1</div>
<div class="one" style="top:474px">1</div>
<div class="one" style="top:492px">1</div>
<div class="one" style="top:510px">1</div>
<div class="one" style="top:528px">1</div>
<div class="one" style="top:546px">1</div>
<div class="one" style="top:563px">1</div>
<div class="one" style="top:581px">1</div>
<div id="wm"><div style="font-size:18px;font-weight:bold;line-height:20px;margin-top:6px;font-family:'Liberation Sans','Noto Sans CJK SC',sans-serif">指标公式网</div><div style="font-size:16.4px;line-height:18px;margin-top:0px;text-shadow:0 1px 1px #3060c0;font-family:'Liberation Sans',sans-serif;padding-left:6px">www.zbgs3.com</div></div>
</body></html>
